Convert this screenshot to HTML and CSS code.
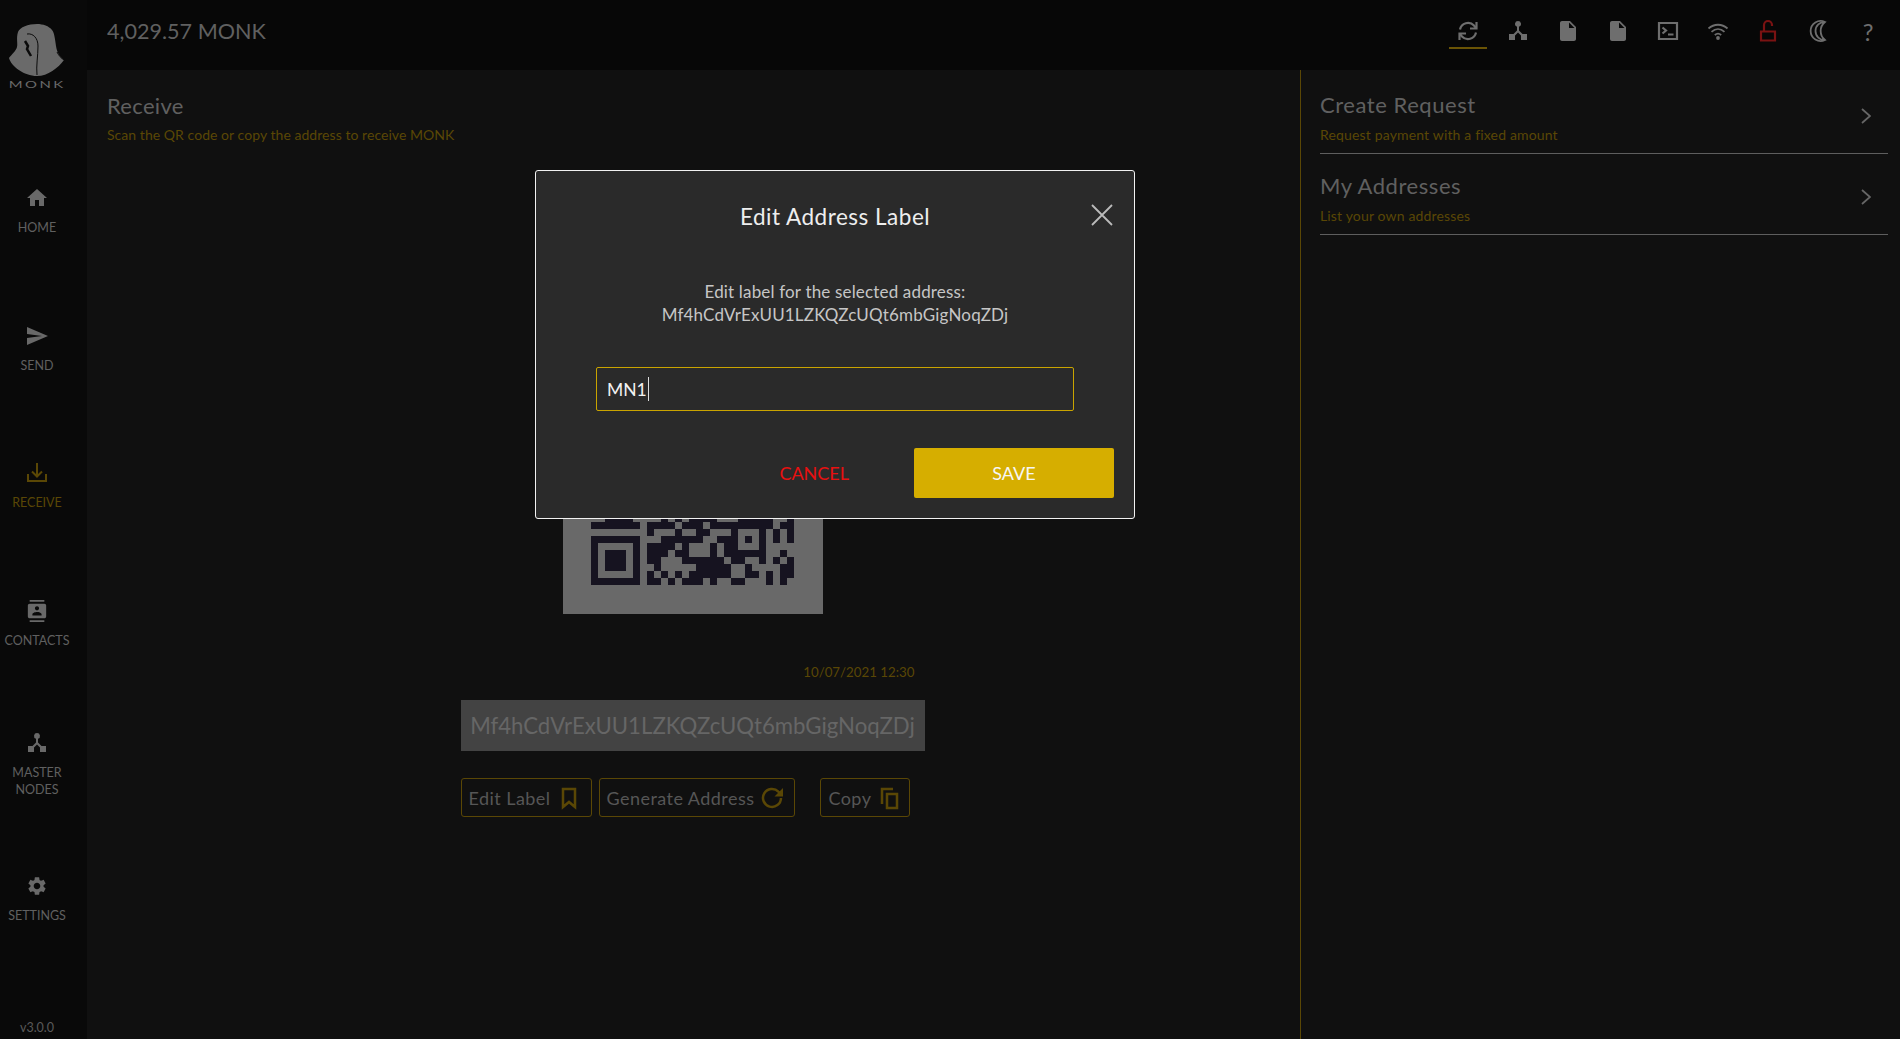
FILE: index.html
```html
<!DOCTYPE html>
<html lang="en">
<head>
    <meta charset="UTF-8">
    <meta name="viewport" content="width=device-width, initial-scale=1.0">
    <title>Monk Wallet - Receive</title>
    <link rel="stylesheet" href="styles.css">
</head>
<body>
    <aside class="sidebar">
        <div class="logo">
            <svg class="logo-mark" viewBox="9 24 56 52">
                <path class="hood" d="M37 24C28 24 20 27 18 32C16 38 18 44 17 47C16 51 12 54 9 58C11 66 24 76 37 76C48 76 58 68 64 60C59 56 57 52 56 46C55 38 54 32 52 30C49 26 43 24 37 24Z"/>
                <path class="hood-line" d="M27 34C33 33 38 38 38 46C38 56 36 66 37 75"/>
                <path class="hood-line thick" d="M25 41L28 46L27 49L31 56"/>
                <path class="hood-line" d="M57 52C59 56 61 58 64 60"/>
            </svg>
            <span class="logo-text">MONK</span>
        </div>
        <nav class="side-nav">
            <a class="nav-item">
                <svg class="nav-icon" viewBox="0 0 24 24"><path d="M10 20v-6h4v6h5v-8h3L12 3 2 12h3v8z"/></svg>
                <span>HOME</span>
            </a>
            <a class="nav-item">
                <svg class="nav-icon" viewBox="0 0 24 24"><path d="M2.01 21L23 12 2.01 3 2 10l15 2-15 2z"/></svg>
                <span>SEND</span>
            </a>
            <a class="nav-item active">
                <svg class="nav-icon line" viewBox="0 0 24 24"><path d="M12 2v13M7 10.5l5 5 5-5M3 13v7h18v-7"/></svg>
                <span>RECEIVE</span>
            </a>
            <a class="nav-item">
                <svg class="nav-icon small" viewBox="0 0 24 24"><path d="M20 0H4v2h16V0zM4 24h16v-2H4v2zM20 4H4c-1.1 0-2 .9-2 2v12c0 1.1.9 2 2 2h16c1.1 0 2-.9 2-2V6c0-1.1-.9-2-2-2zm-8 2.75c1.24 0 2.25 1.01 2.25 2.25s-1.01 2.25-2.25 2.25S9.75 10.24 9.75 9 10.76 6.75 12 6.75zM17 17H7v-1.5c0-1.67 3.33-2.5 5-2.5s5 .83 5 2.5V17z"/></svg>
                <span>CONTACTS</span>
            </a>
            <a class="nav-item two-line">
                <svg class="nav-icon" viewBox="0 0 24 24"><path d="M12 2a3 3 0 0 1 1 5.830V11.500l3.500 3.500H21v6h-6v-4.500l-3-3-3 3V21H3v-6h4.500L11 11.500V7.830A3 3 0 0 1 12 2z"/></svg>
                <span>MASTER<br>NODES</span>
            </a>
            <a class="nav-item">
                <svg class="nav-icon small" viewBox="0 0 24 24"><path d="M19.14 12.94c.04-.3.06-.61.06-.94 0-.32-.02-.64-.07-.94l2.03-1.58c.18-.14.23-.41.12-.61l-1.92-3.32c-.12-.22-.37-.29-.59-.22l-2.39.96c-.5-.38-1.03-.7-1.62-.94l-.36-2.54c-.04-.24-.24-.41-.48-.41h-3.84c-.24 0-.43.17-.47.41l-.36 2.54c-.59.24-1.13.57-1.62.94l-2.39-.96c-.22-.08-.47 0-.59.22L2.74 8.87c-.12.21-.08.47.12.61l2.03 1.58c-.05.3-.09.63-.09.94s.02.64.07.94l-2.03 1.58c-.18.14-.23.41-.12.61l1.92 3.32c.12.22.37.29.59.22l2.39-.96c.5.38 1.03.7 1.62.94l.36 2.54c.05.24.24.41.48.41h3.84c.24 0 .44-.17.47-.41l.36-2.54c.59-.24 1.13-.56 1.62-.94l2.39.96c.22.08.47 0 .59-.22l1.92-3.32c.12-.22.07-.47-.12-.61l-2.01-1.58zM12 15.6c-1.98 0-3.6-1.62-3.6-3.6s1.62-3.6 3.6-3.6 3.6 1.62 3.6 3.6-1.62 3.6-3.6 3.6z"/></svg>
                <span>SETTINGS</span>
            </a>
        </nav>
        <div class="version">v3.0.0</div>
    </aside>

    <div class="content">
        <header class="topbar">
            <div class="balance">4,029.57 MONK</div>
            <div class="tools">
                <span class="tool current">
                    <svg class="line" viewBox="0 0 24 24"><path d="M4 10.500A8.200 8.200 0 0 1 18 6.500l2 2.500M20 13.500A8.200 8.200 0 0 1 6 17.500l-2-2.500"/><path d="M20.500 3v6.500H14M3.500 21v-6.500H10"/></svg>
                </span>
                <span class="tool">
                    <svg viewBox="0 0 24 24"><path d="M12 2a3 3 0 0 1 1 5.830V11.500l3.500 3.500H21v6h-6v-4.500l-3-3-3 3V21H3v-6h4.500L11 11.500V7.830A3 3 0 0 1 12 2z"/></svg>
                </span>
                <span class="tool">
                    <svg viewBox="0 0 24 24"><path d="M6 2c-1.100 0-2 .9-2 2v16c0 1.100.9 2 2 2h12c1.100 0 2-.9 2-2V8l-6-6H6zm7 7V3.500L18.500 9H13z"/></svg>
                </span>
                <span class="tool">
                    <svg viewBox="0 0 24 24"><path d="M6 2c-1.100 0-2 .9-2 2v16c0 1.100.9 2 2 2h12c1.100 0 2-.9 2-2V8l-6-6H6zm7 7V3.500L18.500 9H13z"/></svg>
                </span>
                <span class="tool">
                    <svg class="line" viewBox="0 0 24 24"><path d="M3 4h18v16H3zM6.500 8.500l3.500 3-3.500 3M12 15.500h5.500"/></svg>
                </span>
                <span class="tool">
                    <svg class="line thin" viewBox="0 0 24 24"><path d="M2.500 9.500C8 4.500 16 4.500 21.500 9.500M5.500 12.800C9.500 9.200 14.500 9.200 18.500 12.800M8.800 16C10.600 14.500 13.400 14.500 15.200 16"/><circle class="dot" cx="12" cy="19" r="1.900"/></svg>
                </span>
                <span class="tool">
                    <svg class="line lock" viewBox="0 0 24 24"><path d="M5 12.500h14V21.500H5zM8 12.500V6a4 4 0 0 1 8 0v1"/></svg>
                </span>
                <span class="tool">
                    <svg class="line thin" viewBox="0 0 24 24"><path d="M19 3A10 10 0 1 0 19 21A11.500 11.500 0 0 1 19 3zM19 3A9 9 0 0 0 9.500 12A9 9 0 0 0 19 21"/></svg>
                </span>
                <span class="tool help">?</span>
            </div>
        </header>

        <div class="panels">
            <main class="receive">
                <h2 class="title">Receive</h2>
                <p class="subtitle">Scan the QR code or copy the address to receive MONK</p>
                <div class="receive-box">
                    <svg class="qr" viewBox="-4 -4 37.140 37.140" shape-rendering="crispEdges">
                        <rect class="qr-bg" x="-4" y="-4" width="38" height="38"/>
                        <path class="qr-dots" d="M2 19h4v1H2zM10 19h1v1h-1zM12 19h1v1h-1zM14 19h4v1h-4zM21 19h4v1h-4zM25 19h1v1h-1zM28 19h1v1h-1z
                        M0 20h7v1H0zM8 20h4v1H8zM13 20h3v1h-3zM17 20h9v1h-9zM27 20h2v1h-2z
                        M8 21h1v1H8zM12 21h1v1h-1zM15 21h2v1h-2zM20 21h1v1h-1zM24 21h1v1h-1zM26 21h1v1h-1zM28 21h1v1h-1z
                        M0 22h7v1H0zM10 22h6v1h-6zM18 22h3v1h-3zM22 22h1v1h-1zM24 22h1v1h-1zM26 22h1v1h-1zM28 22h1v1h-1z
                        M0 23h1v1H0zM6 23h1v1H6zM8 23h4v1H8zM13 23h1v1h-1zM17 23h1v1h-1zM19 23h2v1h-2zM24 23h1v1h-1z
                        M0 24h1v1H0zM2 24h3v1H2zM6 24h1v1H6zM8 24h3v1H8zM12 24h2v1h-2zM17 24h1v1h-1zM19 24h6v1h-6zM27 24h1v1h-1z
                        M0 25h1v1H0zM2 25h3v1H2zM6 25h1v1H6zM8 25h2v1H8zM13 25h3v1h-3zM16 25h3v1h-3zM20 25h2v1h-2zM24 25h1v1h-1zM26 25h1v1h-1zM28 25h1v1h-1z
                        M0 26h1v1H0zM2 26h3v1H2zM6 26h1v1H6zM9 26h1v1H9zM15 26h5v1h-5zM22 26h1v1h-1zM27 26h2v1h-2z
                        M0 27h1v1H0zM6 27h1v1H6zM8 27h1v1H8zM10 27h1v1h-1zM12 27h1v1h-1zM14 27h6v1h-6zM22 27h2v1h-2zM25 27h1v1h-1zM27 27h2v1h-2z
                        M0 28h7v1H0zM8 28h2v1H8zM11 28h1v1h-1zM13 28h3v1h-3zM17 28h1v1h-1zM20 28h2v1h-2zM25 28h1v1h-1zM27 28h1v1h-1z"/>
                    </svg>
                    <div class="date">10/07/2021 12:30</div>
                    <div class="address">Mf4hCdVrExUU1LZKQZcUQt6mbGigNoqZDj</div>
                    <div class="actions">
                        <a class="action-btn">Edit Label
                            <svg viewBox="0 0 24 24"><path d="M6 3h12v18l-6-5-6 5z"/></svg>
                        </a>
                        <a class="action-btn">Generate Address
                            <svg viewBox="0 0 24 24"><path d="M21 12a9 9 0 1 1-2.600-6.400L21 8"/><path class="head" d="M23 2v8.500h-8.500z"/></svg>
                        </a>
                        <a class="action-btn copy">Copy
                            <svg viewBox="0 0 24 24"><path d="M5 18V3h11M10 8h10v14H10z"/></svg>
                        </a>
                    </div>
                </div>
            </main>

            <aside class="side-panel">
                <div class="panel-row">
                    <div>
                        <h3>Create Request</h3>
                        <p>Request payment with a fixed amount</p>
                    </div>
                    <svg class="chevron" viewBox="0 0 10 16"><path d="M1 1l8 7-8 7"/></svg>
                </div>
                <div class="panel-row">
                    <div>
                        <h3>My Addresses</h3>
                        <p>List your own addresses</p>
                    </div>
                    <svg class="chevron" viewBox="0 0 10 16"><path d="M1 1l8 7-8 7"/></svg>
                </div>
            </aside>
        </div>
    </div>

    <div class="modal">
        <div class="modal-head">
            <h2>Edit Address Label</h2>
            <svg class="close" viewBox="0 0 22 22"><path d="M1 1l20 20M21 1L1 21"/></svg>
        </div>
        <p class="modal-text">Edit label for the selected address:<br>Mf4hCdVrExUU1LZKQZcUQt6mbGigNoqZDj</p>
        <div class="modal-input">MN1<span class="caret"></span></div>
        <div class="modal-actions">
            <a class="cancel">CANCEL</a>
            <a class="save">SAVE</a>
        </div>
    </div>
</body>
</html>
```

FILE: styles.css
```css
* {
    box-sizing: border-box;
}

body {
    margin: 0;
    height: 1039px;
    overflow: hidden;
    display: flex;
    background: #101010;
    color: #666;
    font-family: 'Lato', 'Noto Sans', sans-serif;
}

h2, h3, p {
    margin: 0;
    font-weight: 400;
}

/* sidebar */
.sidebar {
    width: 87px;
    flex-shrink: 0;
    display: flex;
    flex-direction: column;
    padding-right: 13px;
    background: #090909;
}

.logo {
    height: 142px;
    padding-top: 24px;
    display: flex;
    flex-direction: column;
    align-items: center;
}

.logo-mark {
    width: 56px;
    height: 52px;
    overflow: visible;
}

.hood {
    fill: #6a6a6a;
}

.hood-line {
    fill: none;
    stroke: #0a0a0a;
    stroke-width: 1;
}

.hood-line.thick {
    stroke-width: 2.500;
}

.logo-text {
    margin-top: 4px;
    font-size: 9px;
    line-height: 10px;
    letter-spacing: 1.500px;
    color: #6a6a6a;
    transform: scaleX(1.660);
}

.side-nav {
    display: flex;
    flex-direction: column;
}

.nav-item {
    height: 137.700px;
    display: flex;
    flex-direction: column;
    align-items: center;
    justify-content: center;
    gap: 9px;
    font-size: 12.500px;
    line-height: 17px;
    text-align: center;
    color: #606060;
}

.nav-item.two-line {
    padding-top: 5px;
}

.nav-icon {
    width: 24px;
    height: 24px;
    fill: #696969;
}

.nav-icon.small {
    width: 22px;
    height: 22px;
    margin: 1px 0;
}

.nav-icon.line {
    fill: none;
    stroke: #5a4705;
    stroke-width: 2;
}

.nav-item.active {
    color: #5a4705;
}

.version {
    margin-top: auto;
    padding-bottom: 3px;
    font-size: 12.500px;
    line-height: 17px;
    text-align: center;
    color: #5a5a5a;
}

/* top bar */
.content {
    flex: 1;
    min-width: 0;
    display: flex;
    flex-direction: column;
}

.topbar {
    height: 70px;
    flex-shrink: 0;
    display: flex;
    justify-content: space-between;
    padding: 0 7px 8px 20px;
    align-items: center;
    background: #070707;
}

.balance {
    font-size: 21.600px;
    color: #606060;
}

.tools {
    display: flex;
}

.tool {
    position: relative;
    width: 50px;
    height: 38px;
    display: flex;
    align-items: center;
    justify-content: center;
}

.tool svg {
    width: 24px;
    height: 24px;
    fill: #6e6e6e;
}

.tool svg.line {
    fill: none;
    stroke: #6e6e6e;
    stroke-width: 2.200;
}

.tool svg.thin {
    stroke-width: 1.800;
}

.tool svg .dot {
    fill: #6e6e6e;
    stroke: none;
}

.tool svg.lock {
    stroke: #7a1212;
}

.tool.current::after {
    content: "";
    position: absolute;
    left: 6px;
    right: 6px;
    bottom: 1px;
    height: 2px;
    background: #6a5405;
}

.help {
    font-size: 24px;
    color: #6e6e6e;
}

/* panels */
.panels {
    flex: 1;
    display: flex;
}

.receive {
    width: 1213px;
    padding: 21px 22px 0 20px;
}

.title {
    font-size: 22px;
    line-height: 30px;
    letter-spacing: 0.300px;
    color: #606060;
}

.subtitle {
    margin-top: 4px;
    font-size: 14px;
    line-height: 20px;
    letter-spacing: 0.050px;
    color: #5a4705;
}

.receive-box {
    width: 464px;
    margin: 0 auto;
    padding-top: 209px;
    display: flex;
    flex-direction: column;
}

.qr {
    display: block;
    width: 260px;
    height: 260px;
    margin: 0 auto;
}

.qr-bg {
    fill: #696969;
}

.qr-dots {
    fill: #161320;
}

.date {
    margin-top: 49px;
    padding-right: 10px;
    font-size: 13.300px;
    line-height: 18px;
    text-align: right;
    color: #5a4705;
}

.address {
    height: 51px;
    margin-top: 19px;
    display: flex;
    align-items: center;
    justify-content: center;
    background: #434343;
    font-size: 22.200px;
    color: #666;
}

.actions {
    margin-top: 27px;
    display: flex;
    gap: 7px;
}

.action-btn {
    height: 39px;
    display: flex;
    align-items: center;
    gap: 6px;
    padding: 0 10px 0 7px;
    border: 1px solid #5a4705;
    border-radius: 3px;
    font-size: 18px;
    letter-spacing: 0.450px;
    color: #565656;
}

.action-btn svg {
    width: 24px;
    height: 24px;
    fill: none;
    stroke: #5a4705;
    stroke-width: 2.500;
}

.action-btn svg .head {
    fill: #5a4705;
    stroke: none;
}

.action-btn.copy {
    margin-left: 18px;
    padding-right: 8px;
}

.side-panel {
    flex: 1;
    padding: 0 12px 0 19px;
    border-left: 1px solid #5a4705;
}

.panel-row {
    height: 81px;
    padding-top: 17px;
    display: flex;
    justify-content: space-between;
    border-bottom: 1px solid #5e5e5e;
}

.panel-row:first-child {
    height: 84px;
    padding-top: 20px;
}

.panel-row h3 {
    font-size: 22px;
    line-height: 30px;
    letter-spacing: 0.550px;
    color: #606060;
}

.panel-row p {
    margin-top: 5px;
    font-size: 14px;
    line-height: 20px;
    letter-spacing: 0.160px;
    color: #5a4705;
}

.chevron {
    width: 10px;
    height: 16px;
    margin: 18px 17px 0 0;
    fill: none;
    stroke: #666;
    stroke-width: 1.800;
}

/* dialog, sits over the page */
.modal {
    position: absolute;
    left: 535px;
    top: 170px;
    width: 600px;
    height: 349px;
    padding: 0 20px;
    background: #2a2a2a;
    border: 1px solid #f2f2f2;
    border-radius: 3px;
}

.modal-head {
    position: relative;
    padding-top: 31px;
    text-align: center;
}

.modal-head h2 {
    font-size: 22.500px;
    line-height: 30px;
    letter-spacing: 0.500px;
    color: #eee;
}

.close {
    position: absolute;
    right: 1px;
    top: 33px;
    width: 22px;
    height: 22px;
    fill: none;
    stroke: #bbb;
    stroke-width: 1.800;
}

.modal-text {
    margin-top: 48px;
    font-size: 17px;
    line-height: 23px;
    letter-spacing: 0.170px;
    text-align: center;
    color: #c6c6c6;
}

.modal-input {
    width: 478px;
    height: 44px;
    margin: 41px 0 0 40px;
    padding-left: 10px;
    display: flex;
    align-items: center;
    border: 1px solid #c9a400;
    border-radius: 2px;
    font-size: 17.500px;
    color: #f2f2f2;
}

.caret {
    width: 1px;
    height: 24px;
    margin-left: 1px;
    background: #ddd;
}

.modal-actions {
    margin-top: 37px;
    display: flex;
    justify-content: flex-end;
    align-items: center;
}

.cancel {
    margin-right: 65px;
    font-size: 18px;
    color: #e81010;
}

.save {
    width: 200px;
    height: 50px;
    display: flex;
    align-items: center;
    justify-content: center;
    background: #d6ae00;
    border-radius: 2px;
    font-size: 18px;
    color: #f6f6f6;
}
```
